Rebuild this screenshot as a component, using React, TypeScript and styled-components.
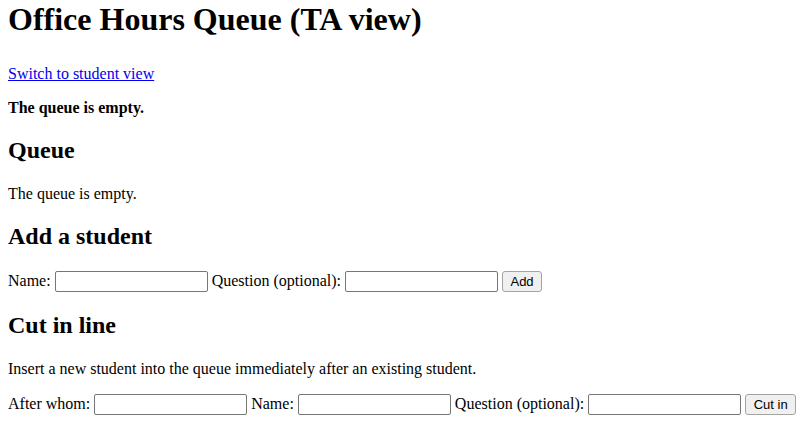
import React, { useState } from 'react';
import styled, { createGlobalStyle } from 'styled-components';

const GlobalStyle = createGlobalStyle`
    body {
        margin: 0 8px 8px;
        font-family: "Liberation Serif", "Times New Roman", serif;
        font-size: 16px;
        color: #000;
        background: #fff;
    }
`;

const Title = styled.h1`
    font-size: 32px;
    font-weight: bold;
    margin: 1px 0 26.5px;
`;

const SectionTitle = styled.h2`
    font-size: 24px;
    font-weight: bold;
    margin: 20.5px 0;
`;

const Text = styled.p<{ $bold?: boolean }>`
    margin: 16px 0;
    font-weight: ${(p) => (p.$bold ? 'bold' : 'normal')};
`;

const ViewLink = styled.a`
    color: #0000ee;
    text-decoration: underline;
`;

const Form = styled.form`
    margin: 0;
    line-height: 20px;
`;

const TextInput = styled.input`
    width: 153px;
    height: 21px;
    box-sizing: border-box;
    margin: 0;
    padding: 1px 2px;
    border: 1px solid #767676;
    border-radius: 2px;
    font-size: 13px;
    vertical-align: baseline;
`;

const Button = styled.button`
    font-family: "Liberation Sans", Arial, sans-serif;
    font-size: 13px;
    height: 21px;
    padding: 1px 7.5px;
    margin: 0;
    border: 1px solid #a3a3a3;
    border-radius: 3px;
    background: #f0f0f0;
    color: #000;
`;

export default function App() {
    const [name, setName] = useState('');
    const [question, setQuestion] = useState('');
    const [after, setAfter] = useState('');
    const [cutName, setCutName] = useState('');
    const [cutQuestion, setCutQuestion] = useState('');

    return (
        <>
            <GlobalStyle />
            <Title>Office Hours Queue (TA view)</Title>
            <ViewLink href="#">Switch to student view</ViewLink>
            <Text $bold>The queue is empty.</Text>

            <SectionTitle>Queue</SectionTitle>
            <Text>The queue is empty.</Text>

            <SectionTitle>Add a student</SectionTitle>
            <Form onSubmit={(e) => e.preventDefault()}>
                Name:{' '}
                <TextInput value={name} onChange={(e) => setName(e.target.value)} />{' '}
                Question (optional):{' '}
                <TextInput value={question} onChange={(e) => setQuestion(e.target.value)} />{' '}
                <Button type="submit">Add</Button>
            </Form>

            <SectionTitle>Cut in line</SectionTitle>
            <Text>Insert a new student into the queue immediately after an existing student.</Text>
            <Form onSubmit={(e) => e.preventDefault()}>
                After whom:{' '}
                <TextInput value={after} onChange={(e) => setAfter(e.target.value)} />{' '}
                Name:{' '}
                <TextInput value={cutName} onChange={(e) => setCutName(e.target.value)} />{' '}
                Question (optional):{' '}
                <TextInput value={cutQuestion} onChange={(e) => setCutQuestion(e.target.value)} />{' '}
                <Button type="submit">Cut in</Button>
            </Form>
        </>
    );
}
